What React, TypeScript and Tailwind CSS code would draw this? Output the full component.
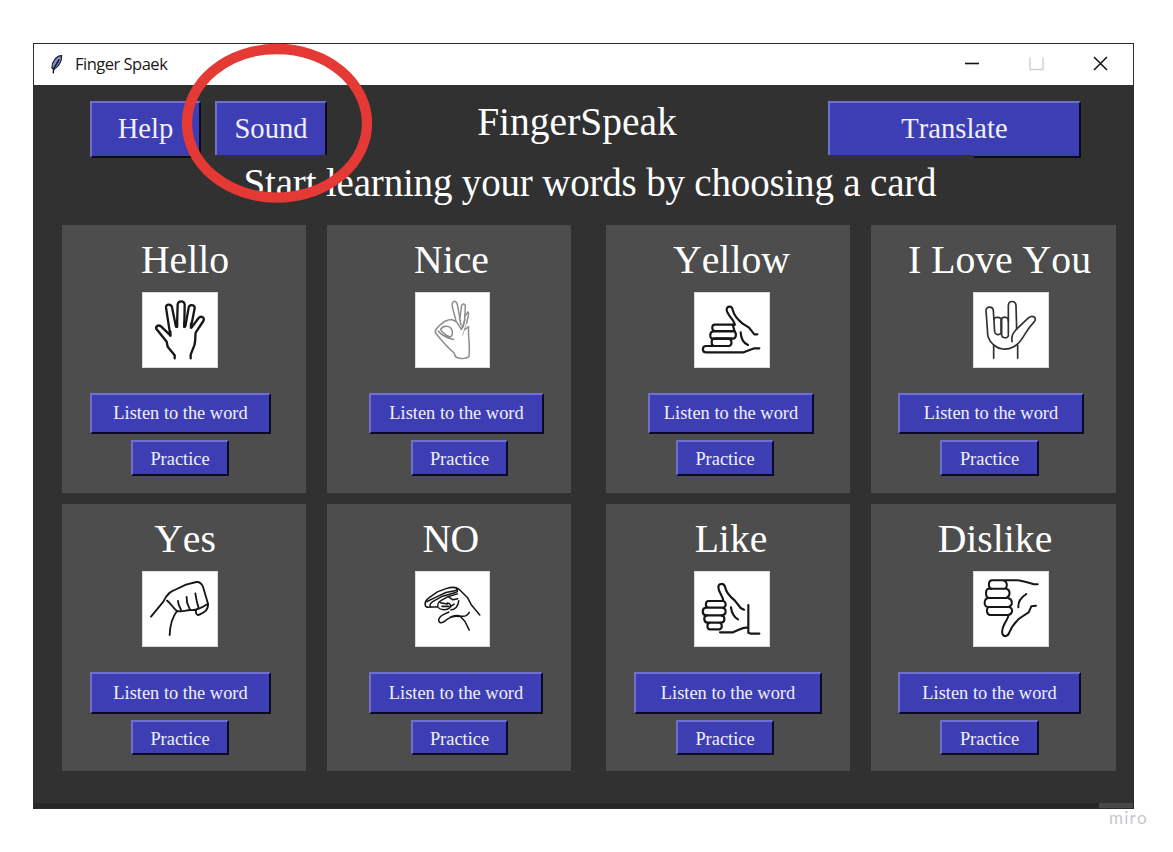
import type { ReactNode } from "react";

type Word = {
  title: string;
  titleClass: string;
  imageClass: string;
  listenClass: string;
  practiceClass: string;
  hand: ReactNode;
};

const hello = (
  <g strokeWidth="7">
    <path d="M119 220 V211 L98 185 L95 170 L65 133 C60 124 70 118 78 124 L106 151 L93 68 C92 56 109 56 111 67 L123 125" />
    <path d="M126 125 L128 58 C130 46 147 46 149 58 L148 125" />
    <path d="M151 124 L161 68 C163 56 180 59 179 70 L168 126" />
    <path d="M170 127 L191 99 C198 91 211 98 205 108 L182 143 C180 158 182 170 178 181 L167 209 V220" />
    <path d="M106 139 V152 M126 112 V126 M148 112 V126 M168 116 V128" />
  </g>
);

const nice = (
  <g stroke="#8c8c8c" strokeWidth="4.5">
    <path d="M144 216 L140 205 C118 187 101 166 84 145 C79 137 86 131 96 121 C108 109 120 103 132 103 L146 109 L135 66 C130 47 144 42 149 55 L156 91 L160 118" />
    <path d="M158 97 L162 65 C163 53 174 53 174 64 L172 101 L168 125" />
    <path d="M173 93 L182 80 L184 87 L178 115 M146 109 C153 119 158 125 162 134 M163 132 L173 104 M172 134 L184 125 M184 128 C181 151 190 181 185 216 C173 225 152 223 144 216" />
    <path d="M99 133 C106 120 129 120 134 137 C137 150 132 159 122 154 C112 149 104 143 99 133 Z M92 138 C103 155 122 159 138 164" />
    <path d="M155 100 L165 128 M176 119 L166 151" strokeWidth="2" />
  </g>
);

const yellow = (
  <g strokeWidth="6.5">
    <path d="M143 119 H84 C73 119 73 138 84 138 H137 C151 139 149 161 137 161 H77 C67 161 67 140 79 139" />
    <path d="M79 161 C71 165 73 181 81 183 M79 161 H126 C136 164 136 181 126 183 H58 C44 183 44 202 58 202 H170 L202 190 H217" />
    <path d="M143 119 C143 106 123 93 119 76 C118 61 135 62 137 74 C141 91 151 103 166 115 L186 128 L202 148 H211" />
    <path d="M161 142 C162 161 169 174 183 180" />
    <path d="M137 119 L143 139 M137 139 H82 M134 161 H84" />
  </g>
);

const love = (
  <g strokeWidth="5" stroke="#303030">
    <path d="M83 220 V180 C66 165 64 152 64 131 L60 77 C59 63 81 63 82 77 L86 141 C87 149 98 151 104 146" />
    <path d="M84 103 C86 95 99 96 105 101 V146 M106 103 C109 94 123 94 127 103 V153 C124 161 109 160 107 151 V103 M105 120 V104" />
    <path d="M127 108 V62 C128 45 149 46 150 62 L152 132 C138 147 136 154 138 170" />
    <path d="M151 133 L188 98 C200 89 214 98 205 110 C183 133 178 147 166 164 C160 174 152 180 143 185 C121 197 98 193 83 180 M155 180 V220" />
  </g>
);

const yes = (
  <g strokeWidth="5.5">
    <path d="M48 158 L85 113 L94 97 C106 81 112 81 119 78 L153 62 L184 54 C195 53 200 59 204 68 L219 119" />
    <path d="M96 110 C108 117 112 131 126 141 C113 158 105 184 104 213 M126 141 C145 145 155 137 167 138 C189 140 205 128 219 119 C221 141 203 147 191 153 C183 154 181 143 184 138" />
    <path d="M129 111 L131 122 L139 140 M155 99 L156 115 L164 135 M181 88 L185 110 L191 133" />
  </g>
);

const no = (
  <g strokeWidth="4.6">
    <path d="M218 153 L192 122 L181 101 L155 75 C143 66 130 69 115 73 L89 83 L61 103 C48 113 49 128 60 130 L68 129 M147 75 C152 79 151 83 144 85 L105 96 L76 112 C67 117 65 124 68 129" />
    <path d="M56 113 L85 99 L115 85 L146 79 M68 129 L90 128 M150 89 L120 98 L101 109 C92 114 88 123 91 130 C98 139 119 139 126 132 C133 126 130 118 119 117 M98 116 L119 120 M103 127 H124" />
    <path d="M124 99 L136 107 L151 104 M130 138 C143 136 152 125 154 110 M131 126 L140 120" />
    <path d="M186 199 L173 173 L159 158 C146 156 136 156 126 162 C112 168 109 179 99 177 C88 174 93 158 107 152 L124 144 M129 159 C140 155 149 153 159 156 C170 159 180 155 186 145" />
  </g>
);

const like = (
  <g strokeWidth="6.5">
    <path d="M109 111 H65 C54 111 54 130 64 131 H103 C121 131 119 153 104 154 H57 C44 153 44 132 57 131 H65" />
    <path d="M60 154 C48 156 50 175 61 176 H103 C116 174 115 156 103 154 M68 176 C59 179 59 194 68 196 H98 C107 193 106 179 98 176" />
    <path d="M109 131 C121 125 116 114 109 111 C109 96 94 86 94 69 C95 57 110 57 114 68 C117 83 128 97 143 109 L161 132 L171 137" />
    <path d="M132 130 C134 147 141 159 153 166 M99 205 H137 C152 201 160 190 183 190 M184 123 V206 L192 209 H217" />
  </g>
);

const dislike = (
  <g strokeWidth="6">
    <path d="M215 61 H204 C177 53 161 49 153 49 H77 C66 51 66 72 76 74 H117 C126 69 123 53 115 51" />
    <path d="M76 74 H67 C57 78 58 100 68 102 H121 C134 97 134 77 121 74 M68 102 C53 104 52 126 65 129 H128 C142 124 140 105 126 102" />
    <path d="M68 129 C59 135 62 153 73 153 H128 C141 148 141 134 132 130 M127 154 C129 165 104 184 109 209 C113 221 126 217 130 205 C137 188 148 174 162 162 L188 145 L196 127 L210 125" />
    <path d="M181 90 C163 101 156 112 157 130" />
  </g>
);

const words: Word[] = [
  { title: "Hello", titleClass: "pl-[2px]", imageClass: "ml-[80px] w-[76px]", listenClass: "ml-[28px] w-[181px] h-[41px]", practiceClass: "ml-[69px] w-[98px] h-[36px]", hand: hello },
  { title: "Nice", titleClass: "pl-[5px]", imageClass: "ml-[88px] w-[75px]", listenClass: "ml-[42px] w-[175px] h-[41px]", practiceClass: "ml-[84px] w-[97px] h-[36px]", hand: nice },
  { title: "Yellow", titleClass: "pl-[7px]", imageClass: "ml-[88px] w-[76px]", listenClass: "ml-[42px] w-[166px] h-[41px]", practiceClass: "ml-[70px] w-[98px] h-[36px]", hand: yellow },
  { title: "I Love You", titleClass: "pl-[12px]", imageClass: "ml-[102px] w-[76px]", listenClass: "ml-[27px] w-[186px] h-[41px]", practiceClass: "ml-[69px] w-[99px] h-[36px]", hand: love },
  { title: "Yes", titleClass: "pl-[2px]", imageClass: "ml-[80px] w-[76px]", listenClass: "ml-[28px] w-[181px] h-[42px]", practiceClass: "ml-[69px] w-[98px] h-[35px]", hand: yes },
  { title: "NO", titleClass: "pl-[3px] tracking-[-0.7px]", imageClass: "ml-[88px] w-[75px]", listenClass: "ml-[42px] w-[174px] h-[42px]", practiceClass: "ml-[84px] w-[97px] h-[35px]", hand: no },
  { title: "Like", titleClass: "pl-[6px]", imageClass: "ml-[88px] w-[76px]", listenClass: "ml-[28px] w-[188px] h-[42px]", practiceClass: "ml-[70px] w-[98px] h-[35px]", hand: like },
  { title: "Dislike", titleClass: "pl-[3px]", imageClass: "ml-[102px] w-[76px]", listenClass: "ml-[27px] w-[183px] h-[42px]", practiceClass: "ml-[69px] w-[99px] h-[35px]", hand: dislike },
];

function TkButton({ className, children }: { className: string; children: ReactNode }) {
  return (
    <button
      className={`flex shrink-0 items-center justify-center whitespace-nowrap border-2 border-t-[#6f6fce] border-r-[#0a0a24] border-b-[#0a0a24] border-l-[#6f6fce] bg-[#3e3eb4] text-[#f0f0fc] ${className}`}
    >
      {children}
    </button>
  );
}

function Card({ word }: { word: Word }) {
  return (
    <section className="flex flex-col items-start bg-[#4d4d4d]">
      <h2 className={`flex h-[67px] w-full items-center justify-center whitespace-nowrap text-[39.7px] leading-none text-white ${word.titleClass}`}>
        <span className="pt-[4px]">{word.title}</span>
      </h2>
      <div className={`h-[76px] shrink-0 border border-[#dcdcdc] bg-white ${word.imageClass}`}>
        <svg viewBox="24 24 222 222" className="h-full w-full" fill="none" stroke="#161616" strokeLinecap="round" strokeLinejoin="round">
          {word.hand}
        </svg>
      </div>
      <TkButton className={`mt-[25px] text-[18.4px] leading-none ${word.listenClass}`}>Listen to the word</TkButton>
      <TkButton className={`mt-[6px] pt-[3px] text-[18.4px] leading-none ${word.practiceClass}`}>Practice</TkButton>
    </section>
  );
}

export default function App() {
  return (
    <div className="relative flex h-[852px] w-[1173px] flex-col overflow-hidden bg-white pt-[43px] font-['Liberation_Serif',serif] [font-kerning:none]">
      <main className="ml-[33px] flex h-[766px] w-[1101px] shrink-0 flex-col border border-[#2c2c2c] bg-[#313131]">
        <header className="flex h-[41px] shrink-0 items-center bg-white font-['Open_Sans',sans-serif]">
          <svg className="ml-[16px] h-[21px] w-[13px]" viewBox="0 0 14 21">
            <path d="M12.5 1 C7 1 2 7 2 14 L4 16 C9 13 13 7 12.5 1Z" fill="#7c8fc4" stroke="#17172a" strokeWidth="1.2" />
            <path d="M10 5 L4 15 M4 14 L3.5 20" stroke="#101018" strokeWidth="1.5" fill="none" />
          </svg>
          <span className="ml-[12px] whitespace-nowrap text-[16.5px] tracking-[-0.5px] text-[#1a1a1a]">Finger Spaek</span>
          <div className="mr-[25px] ml-auto flex items-center gap-[49px] pb-[2px]">
            <svg className="h-[15px] w-[15px]" viewBox="0 0 15 15"><path d="M0 7.5 H14" stroke="#111" strokeWidth="1.6" /></svg>
            <svg className="h-[15px] w-[15px]" viewBox="0 0 15 15"><path d="M1 1.5 V13.5 H14 V1.5" stroke="#cfcfcf" strokeWidth="1.4" fill="none" /></svg>
            <svg className="h-[15px] w-[15px]" viewBox="0 0 15 15"><path d="M1 1 L14 14 M14 1 L1 14" stroke="#111" strokeWidth="1.5" /></svg>
          </div>
        </header>

        <nav className="flex h-[73px] shrink-0 pt-[16px] pl-[56px] text-[28.6px] leading-none">
          <TkButton className="h-[57px] w-[111px]">Help</TkButton>
          <TkButton className="ml-[14px] h-[57px] w-[112px]">Sound</TkButton>
          <h1 className="w-[501px] pt-[2px] pr-[1px] text-center text-[39.5px] leading-none text-white">FingerSpeak</h1>
          <TkButton className="h-[57px] w-[253px]">Translate</TkButton>
        </nav>

        <p className="relative -mt-[3px] ml-[172px] flex h-[70px] w-[768px] shrink-0 justify-center bg-[#313131] pt-[8px] text-[39px] leading-none tracking-[-0.18px] whitespace-nowrap text-white">
          Start learning your words by choosing a card
        </p>

        <div className="ml-[28px] grid w-[1054px] shrink-0 grid-cols-[265px_279px_265px_245px] grid-rows-[268px_267px] gap-y-[11px] [&>*:nth-child(4n+1)]:mr-[21px] [&>*:nth-child(4n+2)]:mr-[35px] [&>*:nth-child(4n+3)]:mr-[21px]">
          {words.map((word) => (
            <Card key={word.title} word={word} />
          ))}
        </div>

        <footer className="mt-auto flex h-[5px] shrink-0 justify-end bg-[#262626]">
          <div className="h-[5px] w-[34px] bg-[#484848]" />
        </footer>
      </main>

      <div className="mr-[25px] self-end font-['Lato',sans-serif] text-[17px] leading-[17px] tracking-[1.3px] text-[#c6c6ce]">miro</div>

      <svg className="pointer-events-none absolute top-[43px] left-[181px] h-[161px] w-[192px]" viewBox="0 0 192 161" fill="none">
        <ellipse cx="96" cy="80.3" rx="90" ry="74.3" stroke="#e53935" strokeWidth="10.3" />
      </svg>
    </div>
  );
}
